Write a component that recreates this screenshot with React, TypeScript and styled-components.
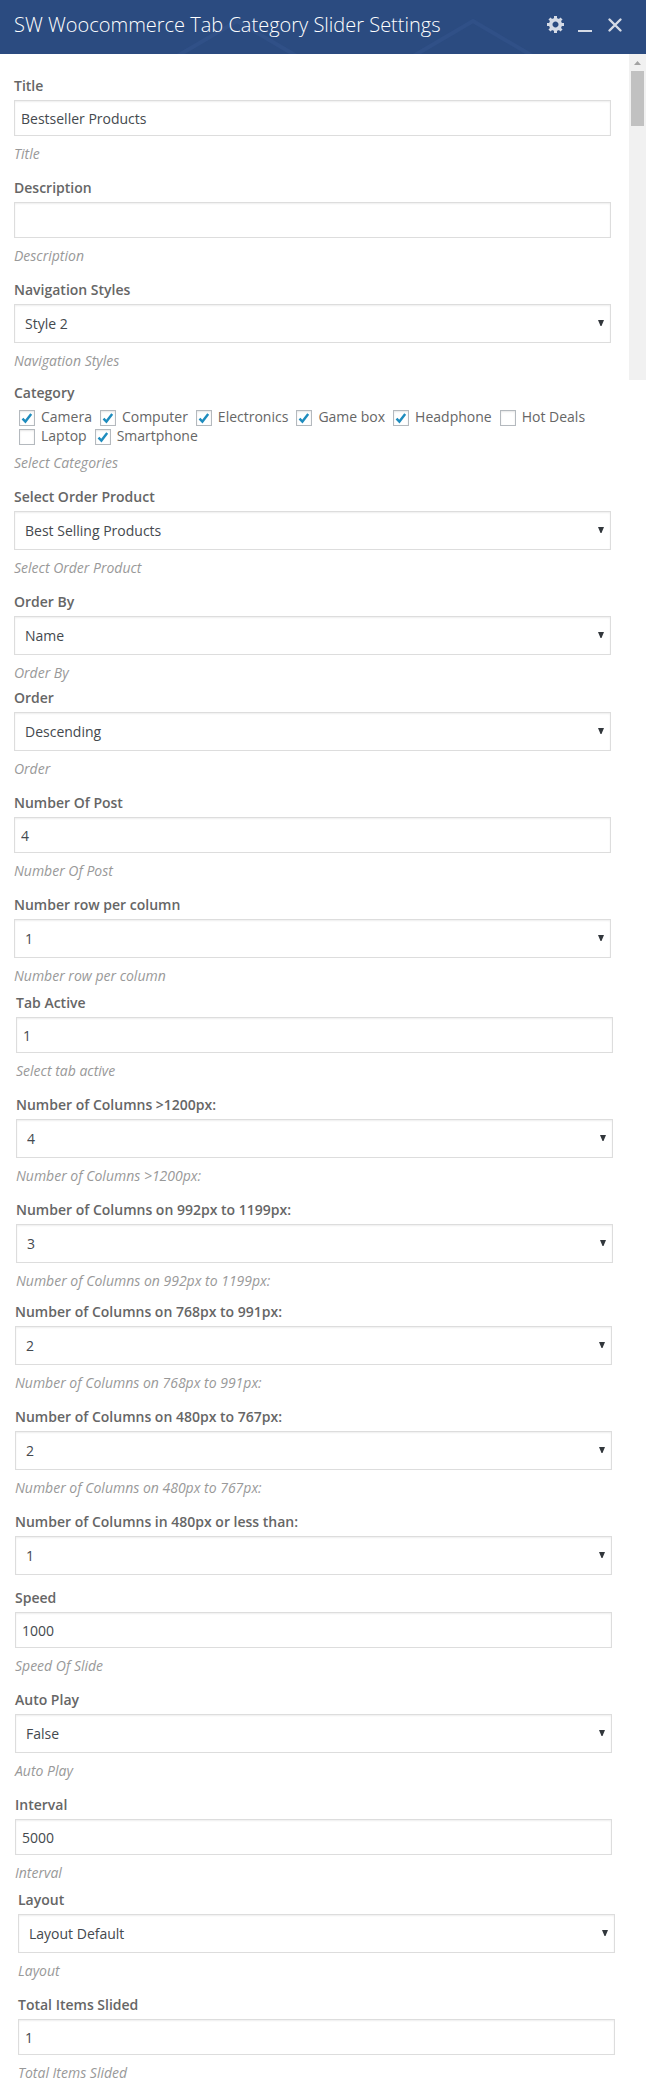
import React, { useId } from 'react';
import styled, { createGlobalStyle } from 'styled-components';

const GlobalStyle = createGlobalStyle`
  *, *::before, *::after { box-sizing: border-box; }
  body {
    margin: 0;
    background: #fff;
    color: #666;
    font-family: "Open Sans", "Noto Sans", sans-serif;
    font-size: 14px;
    line-height: 20px;
  }
`;

const Header = styled.header`
  position: relative;
  display: flex;
  align-items: center;
  justify-content: space-between;
  height: 54px;
  padding: 0 21px 4px 14px;
  background: #2b4b80;
`;

const Pattern = styled.svg`
  position: absolute;
  left: 0;
  top: 0;
`;

const Heading = styled.h1`
  position: relative;
  margin: 0;
  color: #fff;
  font-size: 20px;
  font-weight: 300;
  line-height: 28px;
  white-space: nowrap;
`;

const Tools = styled.div`
  position: relative;
  display: flex;
  gap: 10px;
`;

const ToolButton = styled.button`
  display: flex;
  width: 20px;
  height: 20px;
  padding: 0;
  border: 0;
  background: none;
  color: #d5dbe6;
`;

const Body = styled.div`
  display: flex;
  align-items: flex-start;
`;

const Form = styled.form`
  flex: 1;
  min-width: 0;
  padding: 22px 0;
`;

const Section = styled.section<{ $shift?: number; $before?: number }>`
  display: flex;
  flex-direction: column;
  gap: 14px;
  margin-top: ${p => p.$before ?? 0}px;
  padding: 0 ${p => 18 - (p.$shift ?? 0)}px 0 ${p => 14 + (p.$shift ?? 0)}px;
`;

const FieldBox = styled.div`
  display: flex;
  flex-direction: column;
`;

const FieldLabel = styled.label`
  margin-bottom: 4px;
  font-weight: 600;
`;

const Hint = styled.em`
  margin-top: 8px;
  color: #999;
`;

const TextInput = styled.input`
  width: 100%;
  height: 36px;
  padding: 0 6px;
  border: 1px solid #ddd;
  border-radius: 0;
  background: #fff;
  box-shadow: inset 0 1px 2px rgba(0, 0, 0, 0.07);
  color: #44494e;
  font: inherit;
`;

const SelectWrap = styled.div`
  position: relative;
  display: grid;
`;

const SelectInput = styled.select`
  appearance: none;
  width: 100%;
  height: 39px;
  padding: 0 20px 0 10px;
  border: 1px solid #ddd;
  border-radius: 0;
  background: #fff;
  box-shadow: inset 0 1px 2px rgba(0, 0, 0, 0.07);
  color: #44494e;
  font: inherit;
`;

const Arrow = styled.svg`
  position: absolute;
  right: 7px;
  top: 16px;
  pointer-events: none;
`;

const Group = styled.fieldset`
  margin: 0;
  padding: 0;
  border: 0;
  min-width: 0;
`;

const Legend = styled.legend`
  padding: 0;
  margin-bottom: 4px;
  font-weight: 600;
`;

const Choices = styled.div`
  display: flex;
  flex-wrap: wrap;
  column-gap: 8px;
  padding-left: 5px;
`;

const Choice = styled.label`
  display: flex;
  align-items: flex-end;
  gap: 6px;
  height: 19px;
  line-height: 19px;
  white-space: nowrap;
`;

const Tick = styled.span`
  position: relative;
  display: flex;
  width: 16px;
  height: 16px;
`;

const TickInput = styled.input`
  appearance: none;
  width: 16px;
  height: 16px;
  margin: 0;
  border: 1px solid #b4b9be;
  background: #fff;
  box-shadow: inset 0 1px 2px rgba(0, 0, 0, 0.1);
  & + svg { display: none; }
  &:checked + svg { display: block; }
`;

const TickMark = styled.svg`
  position: absolute;
  left: 2px;
  top: 2px;
  pointer-events: none;
`;

const ScrollTrack = styled.div`
  display: flex;
  flex-direction: column;
  align-items: center;
  width: 17px;
  height: 326px;
  background: #f1f1f1;
`;

const ScrollArrow = styled.svg`
  width: 17px;
  height: 17px;
`;

const ScrollThumb = styled.div`
  width: 13px;
  height: 55px;
  background: #c1c1c1;
`;

function TextField({ label, value, hint }: { label: string; value: string; hint: string }) {
  const id = useId();
  return (
    <FieldBox>
      <FieldLabel htmlFor={id}>{label}</FieldLabel>
      <TextInput id={id} type="text" defaultValue={value} />
      <Hint>{hint}</Hint>
    </FieldBox>
  );
}

function SelectField({ label, value, hint }: { label: string; value: string; hint?: string }) {
  const id = useId();
  return (
    <FieldBox>
      <FieldLabel htmlFor={id}>{label}</FieldLabel>
      <SelectWrap>
        <SelectInput id={id} defaultValue={value}>
          <option>{value}</option>
        </SelectInput>
        <Arrow width="6" height="6" viewBox="0 0 6 6" aria-hidden="true">
          <path d="M0 0h6L3.5 6h-1z" fill="#32373c" />
        </Arrow>
      </SelectWrap>
      {hint && <Hint>{hint}</Hint>}
    </FieldBox>
  );
}

const categories: [string, boolean][] = [
  ['Camera', true],
  ['Computer', true],
  ['Electronics', true],
  ['Game box', true],
  ['Headphone', true],
  ['Hot Deals', false],
  ['Laptop', false],
  ['Smartphone', true],
];

function CategoryField() {
  return (
    <FieldBox>
      <Group>
        <Legend>Category</Legend>
        <Choices>
          {categories.map(([name, checked]) => (
            <Choice key={name}>
              <Tick>
                <TickInput type="checkbox" defaultChecked={checked} />
                <TickMark width="12" height="12" viewBox="0 0 12 12" aria-hidden="true">
                  <path d="M1.5 6.6 4.4 9.6 10.2 2" fill="none" stroke="#1e8cbe" strokeWidth="2.4" />
                </TickMark>
              </Tick>
              {name}
            </Choice>
          ))}
        </Choices>
      </Group>
      <Hint>Select Categories</Hint>
    </FieldBox>
  );
}

export default function App() {
  return (
    <>
      <GlobalStyle />
      <Header>
        <Pattern width="600" height="54" viewBox="0 0 600 54" aria-hidden="true">
          <path d="M174 58 237 21 300 58M410 58 473 21 536 58" fill="none" stroke="#305087" strokeWidth="4" />
        </Pattern>
        <Heading>SW Woocommerce Tab Category Slider Settings</Heading>
        <Tools>
          <ToolButton type="button" aria-label="Settings">
            <svg width="20" height="20" viewBox="-1 1 20 20">
              <path
                fill="currentColor"
                d="M18 12h-2.18c-.17.7-.44 1.35-.81 1.93l1.54 1.54-2.1 2.1-1.54-1.54c-.58.36-1.23.63-1.91.79V19H8v-2.18c-.68-.16-1.33-.43-1.91-.79l-1.54 1.54-2.12-2.12 1.54-1.54c-.36-.58-.63-1.23-.79-1.91H1V9.03h2.17c.16-.7.44-1.35.8-1.94L2.43 5.55l2.1-2.1 1.54 1.54c.58-.37 1.24-.64 1.93-.81V2h3v2.18c.68.16 1.33.43 1.91.79l1.54-1.54 2.12 2.12-1.54 1.54c.36.59.64 1.24.8 1.94H18V12zm-8.5 1.5c1.66 0 3-1.34 3-3s-1.34-3-3-3-3 1.34-3 3 1.34 3 3 3z"
              />
            </svg>
          </ToolButton>
          <ToolButton type="button" aria-label="Minimize">
            <svg width="20" height="20" viewBox="0 0 20 20">
              <path d="M3 15h14v2H3z" fill="currentColor" />
            </svg>
          </ToolButton>
          <ToolButton type="button" aria-label="Close">
            <svg width="20" height="20" viewBox="0 0 20 20">
              <path d="M4.5 4.500 15.500 15.500M15.500 4.500 4.500 15.500" fill="none" stroke="currentColor" strokeWidth="2.4" strokeLinecap="round" />
            </svg>
          </ToolButton>
        </Tools>
      </Header>
      <Body>
        <Form>
          <Section>
            <TextField label="Title" value="Bestseller Products" hint="Title" />
            <TextField label="Description" value="" hint="Description" />
            <SelectField label="Navigation Styles" value="Style 2" hint="Navigation Styles" />
          </Section>
          <Section $before={12}>
            <CategoryField />
            <SelectField label="Select Order Product" value="Best Selling Products" hint="Select Order Product" />
            <SelectField label="Order By" value="Name" hint="Order By" />
          </Section>
          <Section $before={5}>
            <SelectField label="Order" value="Descending" hint="Order" />
            <TextField label="Number Of Post" value="4" hint="Number Of Post" />
            <SelectField label="Number row per column" value="1" hint="Number row per column" />
          </Section>
          <Section $before={7} $shift={2}>
            <TextField label="Tab Active" value="1" hint="Select tab active" />
            <SelectField label="Number of Columns &gt;1200px:" value="4" hint="Number of Columns &gt;1200px:" />
            <SelectField label="Number of Columns on 992px to 1199px:" value="3" hint="Number of Columns on 992px to 1199px:" />
          </Section>
          <Section $before={11} $shift={1}>
            <SelectField label="Number of Columns on 768px to 991px:" value="2" hint="Number of Columns on 768px to 991px:" />
            <SelectField label="Number of Columns on 480px to 767px:" value="2" hint="Number of Columns on 480px to 767px:" />
            <SelectField label="Number of Columns in 480px or less than:" value="1" />
          </Section>
          <Section $before={13} $shift={1}>
            <TextField label="Speed" value="1000" hint="Speed Of Slide" />
            <SelectField label="Auto Play" value="False" hint="Auto Play" />
            <TextField label="Interval" value="5000" hint="Interval" />
          </Section>
          <Section $before={7} $shift={4}>
            <SelectField label="Layout" value="Layout Default" hint="Layout" />
            <TextField label="Total Items Slided" value="1" hint="Total Items Slided" />
          </Section>
        </Form>
        <ScrollTrack aria-hidden="true">
          <ScrollArrow viewBox="0 0 17 17">
            <path d="M5 11 8.5 7 12 11z" fill="#a3a3a3" />
          </ScrollArrow>
          <ScrollThumb />
        </ScrollTrack>
      </Body>
    </>
  );
}
